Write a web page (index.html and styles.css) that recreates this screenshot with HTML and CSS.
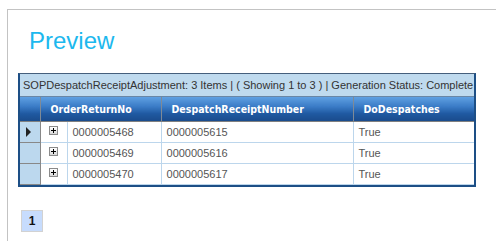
FILE: index.html
```html
<!DOCTYPE html>
<html lang="en">
<head>
    <meta charset="UTF-8">
    <title>Preview</title>
    <link rel="stylesheet" href="styles.css">
</head>
<body>
    <div class="panel">
        <h1 class="page-title">Preview</h1>

        <div class="grid">
            <div class="grid-caption">SOPDespatchReceiptAdjustment: 3 Items | ( Showing 1 to 3 ) | Generation Status: Complete</div>
            <table class="grid-table">
                <colgroup>
                    <col class="col-selector">
                    <col class="col-expand">
                    <col class="col-order">
                    <col class="col-receipt">
                    <col>
                </colgroup>
                <thead>
                    <tr>
                        <th class="selector"></th>
                        <th colspan="2">OrderReturnNo</th>
                        <th>DespatchReceiptNumber</th>
                        <th>DoDespatches</th>
                    </tr>
                </thead>
                <tbody>
                    <tr>
                        <td class="selector"><span class="current-arrow"></span></td>
                        <td class="expand"><span class="plus-box"></span></td>
                        <td>0000005468</td>
                        <td>0000005615</td>
                        <td>True</td>
                    </tr>
                    <tr>
                        <td class="selector"></td>
                        <td class="expand"><span class="plus-box"></span></td>
                        <td>0000005469</td>
                        <td>0000005616</td>
                        <td>True</td>
                    </tr>
                    <tr>
                        <td class="selector"></td>
                        <td class="expand"><span class="plus-box"></span></td>
                        <td>0000005470</td>
                        <td>0000005617</td>
                        <td>True</td>
                    </tr>
                </tbody>
            </table>
        </div>

        <div class="pager">
            <span class="page current">1</span>
        </div>
    </div>
</body>
</html>
```

FILE: styles.css
```css
body {
    margin: 0;
    background-color: #ffffff;
    font-family: "Liberation Sans", Arial, sans-serif;
}

.panel {
    margin: 9px 0 0 7px;
    width: 478px;
    height: 231px;
    border-top: 1px solid #c3c3c3;
    border-left: 1px solid #c3c3c3;
    padding: 0 0 0 10px;
}

.page-title {
    margin: 0;
    padding: 17px 0 0 11px;
    height: 63px;
    box-sizing: border-box;
    font-size: 24px;
    font-weight: normal;
    line-height: 28px;
    color: #1cb8ee;
}

.grid {
    width: 454px;
    border-top: 1px solid #455f7c;
    border-left: 2px solid #1d4f86;
    border-right: 2px solid #1d4f86;
    border-bottom: 2px solid #1d4f86;
}

.grid-caption {
    height: 22px;
    line-height: 22px;
    padding-left: 3px;
    background-color: #bfdaee;
    border-bottom: 1px solid #6a87a6;
    color: #333333;
    font-size: 11px;
    white-space: nowrap;
    overflow: hidden;
}

.grid-table {
    width: 100%;
    border-collapse: collapse;
    table-layout: fixed;
    font-size: 11px;
}

.col-selector { width: 20px; }
.col-expand { width: 27px; }
.col-order { width: 94px; }
.col-receipt { width: 192px; }

.grid-table th {
    height: 24px;
    padding: 0 0 0 10px;
    text-align: left;
    color: #ffffff;
    font-family: "DejaVu Sans Condensed", "DejaVu Sans", sans-serif;
    font-weight: bold;
    font-size: 10.5px;
    background: linear-gradient(#5fa0e2, #3a7bc6 40%, #1f59a1 70%, #1a4c8c);
    border-right: 1px solid #7f8a96;
    border-bottom: 1px solid #808080;
}

.grid-table th:last-child {
    border-right: none;
}

.grid-table td {
    height: 20px;
    padding: 0 0 0 5px;
    color: #555555;
    border-right: 1px solid #bcd6ec;
    border-bottom: 1px solid #bcd6ec;
}

.grid-table td:last-child {
    border-right: none;
}

.grid-table td.selector {
    padding: 0;
    background-color: #bcd8ee;
    border-right: 1px solid #888888;
    border-bottom: 1px solid #888888;
}

.grid-table td.expand {
    padding: 0 0 0 8px;
}

.current-arrow {
    display: block;
    width: 0;
    height: 0;
    margin-left: 6px;
    border-top: 5px solid transparent;
    border-bottom: 5px solid transparent;
    border-left: 5px solid #222222;
}

.plus-box {
    display: block;
    position: relative;
    width: 7px;
    height: 7px;
    margin-top: -3px;
    border: 1px solid #8a8a8a;
    background: linear-gradient(#ffffff, #d8d8d8);
}

.plus-box::before,
.plus-box::after {
    content: "";
    position: absolute;
    background-color: #000000;
}

.plus-box::before {
    left: 1px;
    top: 3px;
    width: 5px;
    height: 1px;
}

.plus-box::after {
    left: 3px;
    top: 1px;
    width: 1px;
    height: 5px;
}

.pager {
    margin: 23px 0 0 3px;
}

.page {
    display: inline-block;
    width: 20px;
    height: 20px;
    line-height: 20px;
    text-align: center;
    font-size: 12px;
    font-weight: bold;
    color: #111111;
    background-color: #c7dcfd;
    border: 1px solid #d2d2d2;
}
```
